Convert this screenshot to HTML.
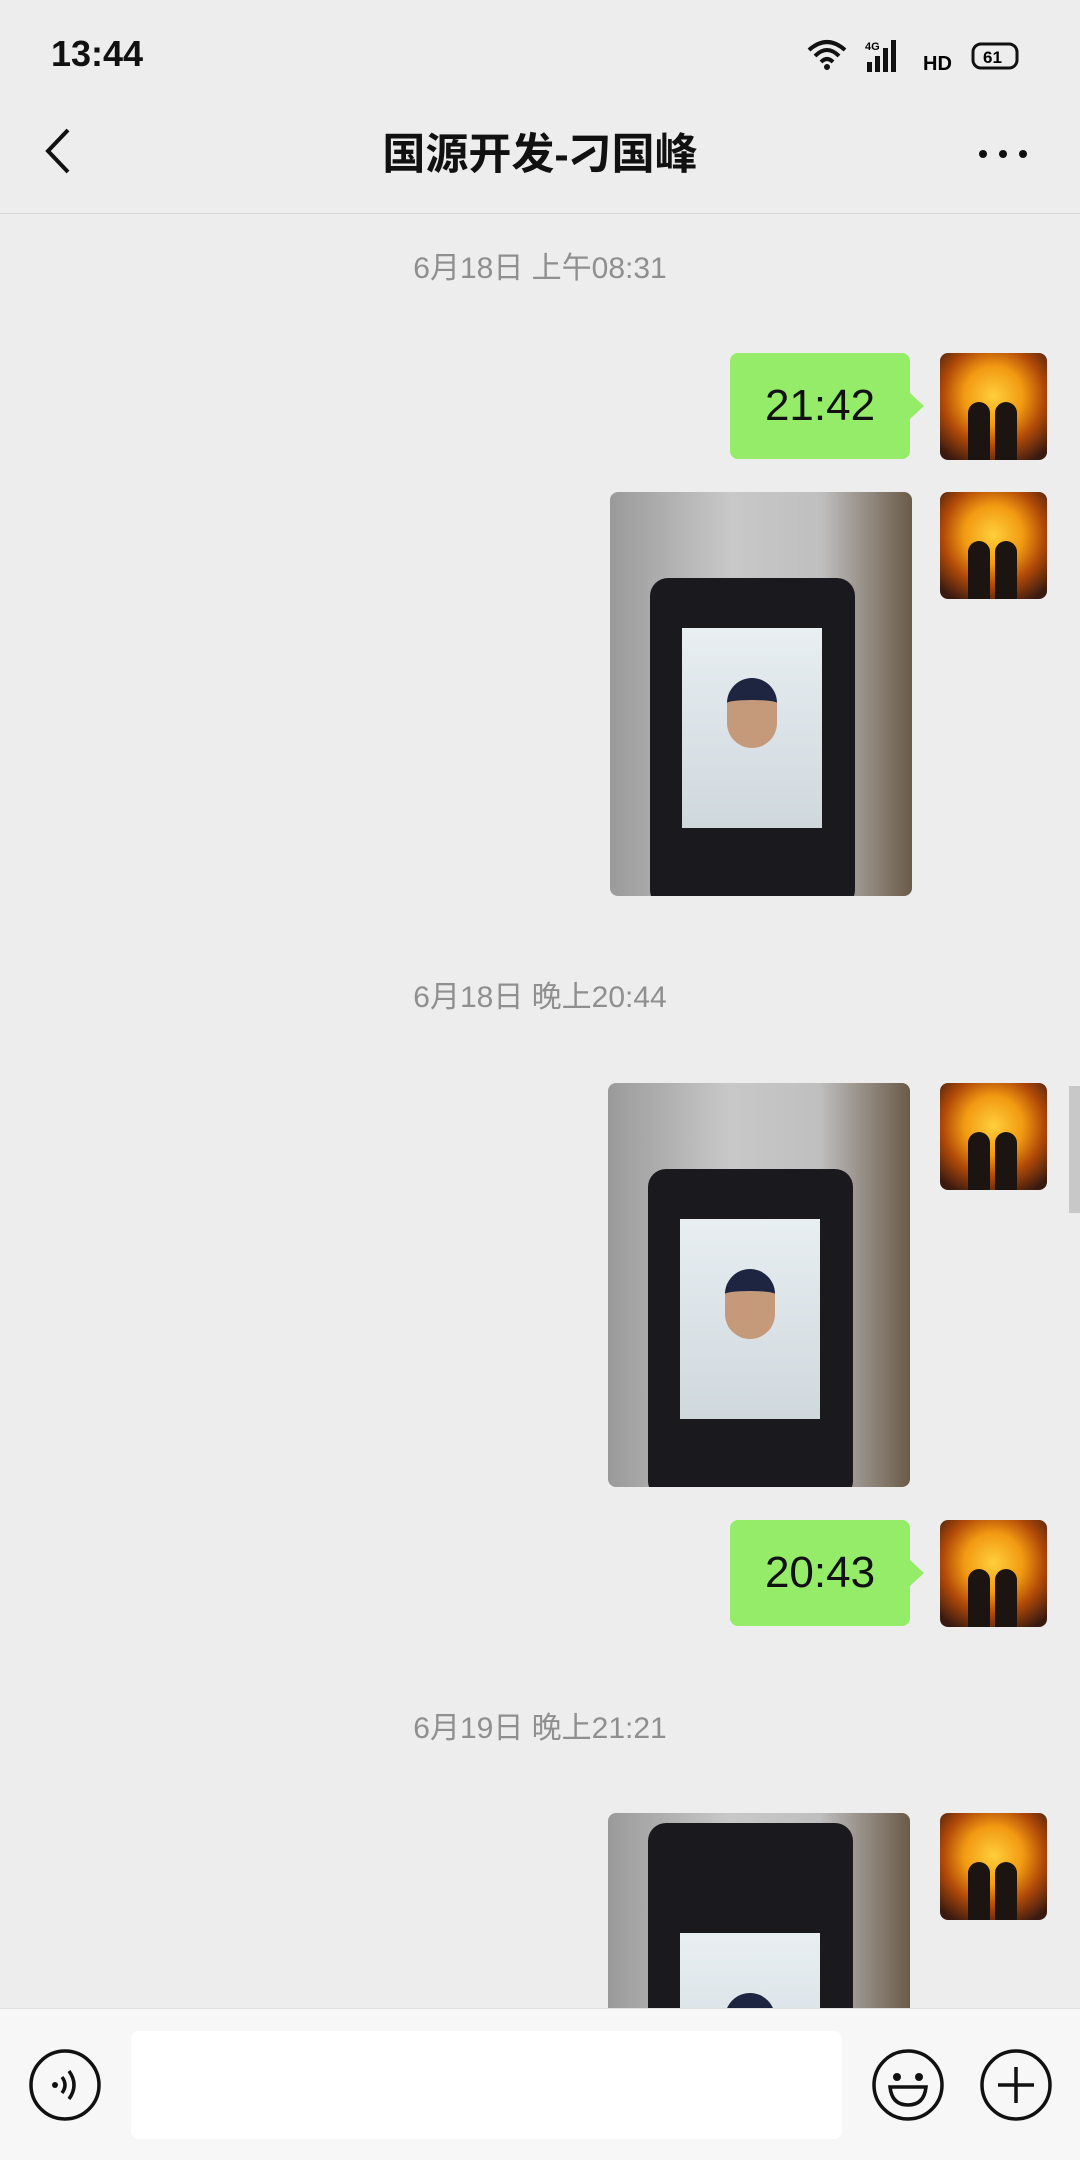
<!DOCTYPE html>
<html><head><meta charset="utf-8">
<style>
*{margin:0;padding:0;box-sizing:border-box}
body{width:1080px;height:2160px;background:#ededed;position:relative;overflow:hidden;font-family:"Liberation Sans","Noto Sans CJK SC",sans-serif}
.abs{position:absolute}
.ts{position:absolute;left:0;width:1080px;text-align:center;color:#8f8f8f;font-size:30px}
.bub{position:absolute;left:730px;width:180px;height:106px;background:#95ec69;border-radius:8px;font-size:44px;color:#111;text-align:center;line-height:106px}
.bub:after{content:"";position:absolute;right:-14px;top:40px;border:13px solid transparent;border-left:14px solid #95ec69;border-right:0}
.av{position:absolute;left:940px;width:107px;height:107px;border-radius:8px;overflow:hidden;background:radial-gradient(circle at 50% 40%,#ffcf3a 0,#f29a12 35%,#b24a08 60%,#3a1a10 90%)}
.av i{position:absolute;bottom:0;width:22px;height:58px;background:#1b1410;border-radius:11px 11px 0 0}
.img{position:absolute;left:608px;width:302px;border-radius:8px;overflow:hidden;background:linear-gradient(90deg,#9a9a9a,#c8c8c8 40%,#bfbfbf 70%,#6a5a48)}
.dev{position:absolute;left:40px;top:86px;width:205px;height:330px;background:#1a1a1e;border-radius:18px}
.scr{position:absolute;left:32px;top:50px;width:140px;height:200px;background:linear-gradient(#e8eef2,#cfd8dd);}
.face{position:absolute;left:45px;top:50px;width:50px;height:70px;border-radius:25px;background:#c59a7a;border-top:22px solid #1d2540}
</style></head><body>
<div class="abs" style="left:51px;top:33px;font-size:36px;font-weight:bold;color:#111">13:44</div>
<div class="abs" style="left:805px;top:36px;font-size:24px;color:#111;font-weight:bold">
<svg width="220" height="40" viewBox="0 0 220 40"><path d="M4 14 Q22 -2 40 14 M10 20 Q22 8 34 20 M16 26 Q22 20 28 26" stroke="#111" stroke-width="4" fill="none"/><circle cx="22" cy="31" r="3" fill="#111"/>
<rect x="62" y="26" width="5" height="10" fill="#111"/><rect x="70" y="20" width="5" height="16" fill="#111"/><rect x="78" y="12" width="5" height="24" fill="#111"/><rect x="86" y="4" width="5" height="32" fill="#111"/>
<text x="60" y="14" font-size="11" font-weight="bold">4G</text>
<text x="118" y="34" font-size="20" font-weight="bold">HD</text>
<rect x="168" y="8" width="44" height="24" rx="8" fill="none" stroke="#111" stroke-width="3"/><text x="178" y="27" font-size="17" font-weight="bold">61</text></svg></div>
<svg class="abs" style="left:40px;top:126px" width="36" height="50"><path d="M28 4 L8 25 L28 46" stroke="#111" stroke-width="4" fill="none"/></svg>
<div class="abs" style="left:0;width:1080px;top:120px;text-align:center;font-size:43px;font-weight:bold;color:#111">国源开发-刁国峰</div>
<div class="abs" style="left:978px;top:146px"><svg width="50" height="10"><circle cx="5" cy="5" r="4" fill="#111"/><circle cx="25" cy="5" r="4" fill="#111"/><circle cx="45" cy="5" r="4" fill="#111"/></svg></div>
<div class="abs" style="left:0;top:213px;width:1080px;height:1px;background:#d6d6d6"></div>

<div class="ts" style="top:243px">6月18日 上午08:31</div>
<div class="bub" style="top:353px">21:42</div>
<div class="av" style="top:353px"><i style="left:28px"></i><i style="left:55px"></i></div>

<div class="img" style="top:492px;left:610px;height:404px"><div class="dev"><div class="scr"><div class="face"></div></div></div></div>
<div class="av" style="top:492px"><i style="left:28px"></i><i style="left:55px"></i></div>

<div class="ts" style="top:972px">6月18日 晚上20:44</div>
<div class="img" style="top:1083px;height:404px"><div class="dev"><div class="scr"><div class="face"></div></div></div></div>
<div class="av" style="top:1083px"><i style="left:28px"></i><i style="left:55px"></i></div>
<div class="abs" style="left:1069px;top:1086px;width:11px;height:127px;background:#c8c8c8"></div>

<div class="bub" style="top:1520px">20:43</div>
<div class="av" style="top:1520px"><i style="left:28px"></i><i style="left:55px"></i></div>

<div class="ts" style="top:1703px">6月19日 晚上21:21</div>
<div class="img" style="top:1813px;height:220px"><div class="dev" style="top:10px"><div class="scr" style="top:110px"><div class="face" style="top:60px"></div></div></div></div>
<div class="av" style="top:1813px"><i style="left:28px"></i><i style="left:55px"></i></div>

<div class="abs" style="left:0;top:2008px;width:1080px;height:152px;background:#f7f7f7;border-top:1px solid #e0e0e0"></div>
<div class="abs" style="left:131px;top:2031px;width:711px;height:108px;background:#fff;border-radius:8px"></div>
<svg class="abs" style="left:27px;top:2047px" width="76" height="76"><circle cx="38" cy="38" r="34" stroke="#111" stroke-width="3.5" fill="none"/><circle cx="28" cy="38" r="3" fill="#111"/><path d="M35 30 Q41 38 35 46 M42 24 Q52 38 42 52" stroke="#111" stroke-width="3.5" fill="none"/></svg>
<svg class="abs" style="left:870px;top:2047px" width="76" height="76"><circle cx="38" cy="38" r="34" stroke="#111" stroke-width="3.5" fill="none"/><circle cx="27" cy="30" r="4" fill="#111"/><circle cx="49" cy="30" r="4" fill="#111"/><path d="M20 40 L56 40 Q54 58 38 58 Q22 58 20 40Z" stroke="#111" stroke-width="3.5" fill="none"/></svg>
<svg class="abs" style="left:978px;top:2047px" width="76" height="76"><circle cx="38" cy="38" r="34" stroke="#111" stroke-width="3.5" fill="none"/><path d="M38 20 V56 M20 38 H56" stroke="#111" stroke-width="3.5"/></svg>
</body></html>
